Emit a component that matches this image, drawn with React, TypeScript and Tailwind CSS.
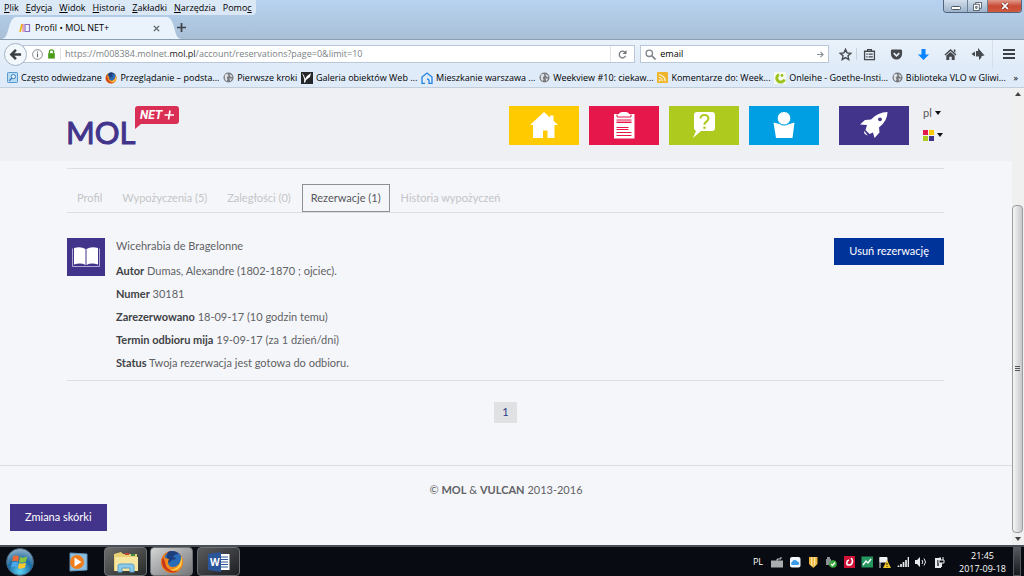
import { useState } from 'react'
import type { ReactNode } from 'react'

const MENU = [
  ['', 'P', 'lik'],
  ['', 'E', 'dycja'],
  ['', 'W', 'idok'],
  ['', 'H', 'istoria'],
  ['', 'Z', 'akładki'],
  ['', 'N', 'arzędzia'],
  ['Pomo', 'c', ''],
]

const TABS = ['Profil', 'Wypożyczenia (5)', 'Zaległości (0)', 'Rezerwacje (1)', 'Historia wypożyczeń']

const DETAILS = [
  ['Autor', 'Dumas, Alexandre (1802-1870 ; ojciec).'],
  ['Numer', '30181'],
  ['Zarezerwowano', '18-09-17 (10 godzin temu)'],
  ['Termin odbioru mija', '19-09-17 (za 1 dzień/dni)'],
  ['Status', 'Twoja rezerwacja jest gotowa do odbioru.'],
]

function Firefox({ className }: { className: string }) {
  return (
    <svg viewBox="0 0 24 24" className={className} aria-hidden="true">
      <circle cx="12" cy="12" r="11" fill="#e8701a" />
      <circle cx="13" cy="10" r="9" fill="#2b6cb8" />
      <path d="M8 2c3-2 8-1 11 2-3 0-5 1-6 3 2 0 3 1 3 2l-4 1-3 3c-2-2-3-7-1-11z" fill="#1d3f7e" />
      <path d="M21 5c3 6 2 12-2 15-5 4-13 3-16-2C1 14 1 9 4 5l1 3 4 1-1 3c0 3 2 5 5 5 5 0 9-5 8-12z" fill="#f08a1d" />
      <path d="M21 6c2 5 1 10-3 13-3 2-7 2-9 1 8 0 13-6 12-14z" fill="#ffd44a" />
      <path d="M3 7c-2 5-1 10 3 13 4 3 9 3 12 1-5 1-10-1-12-5-1-3-1-6-3-9z" fill="#c8351b" />
    </svg>
  )
}

function Globe() {
  return (
    <svg viewBox="0 0 12 12" className="size-[11px] shrink-0" aria-hidden="true">
      <circle cx="6" cy="6" r="5.5" fill="#777b80" />
      <path d="M2 3l3-1 1 2-2 2 1 2-1 2-2-2zM7 2l3 2v2L8 5zM7 7l3 0-2 3z" fill="#dfe3e6" />
    </svg>
  )
}

const BOOKMARKS: { label: string; icon: ReactNode }[] = [
  {
    label: 'Często odwiedzane',
    icon: (
      <svg viewBox="0 0 12 12" className="size-[11px] shrink-0" aria-hidden="true">
        <rect x=".5" y=".5" width="11" height="11" rx="1" fill="#b9dcf5" stroke="#4b8fc7" />
        <circle cx="7" cy="5" r="2.3" fill="#e8f5fd" stroke="#2f74b5" />
        <path d="M5.3 6.7L2.5 9.5" stroke="#2f74b5" strokeWidth="1.4" />
      </svg>
    ),
  },
  { label: 'Przeglądanie – podsta...', icon: <Firefox className="size-3 shrink-0" /> },
  { label: 'Pierwsze kroki', icon: <Globe /> },
  {
    label: 'Galeria obiektów Web ...',
    icon: (
      <svg viewBox="0 0 12 12" className="size-3 shrink-0" aria-hidden="true">
        <path d="M0 0h12v12H0z" fill="#25282b" />
        <path d="M1 1c2 2 3 4 3 6l2-3 4-3-1 4-4 3-1 3-1-1c1-3-1-6-2-9z" fill="#fff" />
      </svg>
    ),
  },
  {
    label: 'Mieszkanie warszawa ...',
    icon: (
      <svg viewBox="0 0 12 12" className="size-3 shrink-0" fill="none" stroke="#2583e0" strokeWidth="1.3" aria-hidden="true">
        <path d="M4 11.300H1V5l5-4 5 4v6.300H8V8.500a2 2 0 00-2-1.500" />
      </svg>
    ),
  },
  { label: 'Weekview #10: ciekaw...', icon: <Globe /> },
  {
    label: 'Komentarze do: Week...',
    icon: (
      <svg viewBox="0 0 12 12" className="size-[11px] shrink-0" aria-hidden="true">
        <rect width="12" height="12" rx="1" fill="#efb52d" />
        <path d="M2 3a7 7 0 017 7M2 6a4 4 0 014 4" fill="none" stroke="#fff6d8" strokeWidth="1.300" />
        <circle cx="3" cy="9.300" r="1" fill="#fff6d8" />
      </svg>
    ),
  },
  {
    label: 'Onleihe - Goethe-Insti...',
    icon: (
      <svg viewBox="0 0 12 12" className="size-3 shrink-0" aria-hidden="true">
        <path d="M0 0h12v12H0z" fill="#f6faf0" />
        <path d="M5 2.500a4 4 0 105.500 5" fill="none" stroke="#9cc31c" strokeWidth="3" />
        <circle cx="8" cy="3.500" r="1.400" fill="#9cc31c" />
      </svg>
    ),
  },
  { label: 'Biblioteka VLO w Gliwi...', icon: <Globe /> },
]

const TOOLS: { label: string; icon: ReactNode }[] = [
  {
    label: 'Zakładki',
    icon: (
      <svg viewBox="0 0 14 14" className="size-[13px]" fill="none" stroke="#45484c" aria-hidden="true">
        <path d="M1.700 3.500h10.600v9H1.700z" strokeWidth="1.400" />
        <path d="M5 3.500V1.700h4v1.800" strokeWidth="1.400" />
        <path d="M3.500 6.500h1.500M6 6.500h4.500M3.500 9.500h1.500M6 9.500h4.500" strokeWidth="1.400" />
      </svg>
    ),
  },
  {
    label: 'Pocket',
    icon: (
      <svg viewBox="0 0 14 14" className="size-[13px]" aria-hidden="true">
        <path d="M1 3a1.500 1.500 0 011.500-1.500h9A1.500 1.500 0 0113 3v3.500a6 6 0 01-12 0z" fill="#45484c" />
        <path d="M4 5.500l3 3 3-3" fill="none" stroke="#e4effa" strokeWidth="1.700" />
      </svg>
    ),
  },
  {
    label: 'Pobieranie',
    icon: (
      <svg viewBox="0 0 14 14" className="size-[13px]" aria-hidden="true">
        <path d="M4.800 1h4.400v6H13l-6 6-6-6h3.800z" fill="#0a84ff" />
      </svg>
    ),
  },
  {
    label: 'Strona startowa',
    icon: (
      <svg viewBox="0 0 14 14" className="size-[13px]" fill="#45484c" aria-hidden="true">
        <path d="M7 1l6.500 6-1 1L7 3.200 1.500 8l-1-1z" />
        <path d="M10.500 1.500h1.700v3.500l-1.700-1.500zM2.500 8L7 4.200 11.500 8v5H8.300V9.500H5.700V13H2.500z" />
      </svg>
    ),
  },
  {
    label: 'Dodatki',
    icon: (
      <svg viewBox="0 0 14 14" className="size-[14px]" fill="#45484c" aria-hidden="true">
        <path d="M7 1l6.500 7.500-3 .5v1.500L8 13V9.500H5V4h2z" />
        <path d="M4 4.500v5L.5 7z" />
      </svg>
    ),
  },
]

const NAV: { label: string; tile: string; icon: ReactNode }[] = [
  {
    label: 'Strona główna',
    tile: 'bg-[#ffcb00]',
    icon: <path d="M14 0l6 5.500V3.500h3.500v5.200L28 13h-3.500v13h-7v-7.500h-4.500V26H3V13H0z" />,
  },
  {
    label: 'Katalog',
    tile: 'bg-[#e5174b]',
    icon: (
      <>
        <path d="M4 2h5c0-1.500 2-2 5-2s5 .5 5 2h5.500v24.500H4z" />
        <path d="M7 2.500v2.500h14V2.500" fill="none" stroke="#e5174b" />
        <path d="M6.500 8h15M6.500 10.500h15M6.500 15.500h12M6.500 17.500h12M6.500 20.500h15M6.500 23.500h15" stroke="#e5174b" strokeWidth="1" />
        <path d="M6.500 9.200h15" stroke="#ef6f8e" />
      </>
    ),
  },
  {
    label: 'Pomoc',
    tile: 'bg-[#afca1f]',
    icon: (
      <>
        <path d="M7 0h15q3 0 3 3v13q0 3-3 3H11L3 26l3-7Q4 18 4 16V3q0-3 3-3z" />
        <path d="M10.500 6.500c0-4.500 8-4.500 8-.2 0 3.200-4 3-4 6.500" fill="none" stroke="#afca1f" strokeWidth="2" />
        <circle cx="14.500" cy="15.700" r="1.300" fill="#afca1f" />
      </>
    ),
  },
  {
    label: 'Czytelnik',
    tile: 'bg-[#009fe3]',
    icon: (
      <>
        <path d="M3.500 10.500l6 1.500q5 2 10 0l5-1.500L22.500 26H6z" />
        <circle cx="14" cy="6.300" r="6.800" stroke="#009fe3" />
      </>
    ),
  },
  {
    label: 'Nowości',
    tile: 'ml-[10px] bg-[#42348b]',
    icon: (
      <>
        <path d="M27.500 0q0 9-8.500 15.500l.5 5L14.500 26l-1.500-5.500-3.500 1.500-4-4L7 13 0 12.500 5 8l6-.500Q18 0 27.500 0z" />
        <path d="M4 19q-.5 3.500 4 4.500-1.500-1.500-2-2.500z" />
        <circle cx="20" cy="7.300" r="1.900" fill="#42348b" />
      </>
    ),
  },
]

const TRAY: { label: string; icon: ReactNode }[] = [
  {
    label: 'Klawiatura',
    icon: <path d="M0 5h12v6H0zM6 5V3h4V1" fill="#a9adb0" stroke="#a9adb0" />,
  },
  {
    label: 'iCloud',
    icon: (
      <>
        <rect x="1" y="1" width="10.500" height="10.500" rx="2" fill="#f4f8fc" />
        <path d="M3 9a1.700 1.700 0 010-3 3 3 0 015.500-.5A1.800 1.800 0 019 9z" fill="#3a9be8" />
      </>
    ),
  },
  {
    label: 'Ochrona',
    icon: (
      <>
        <path d="M2 1h8.500v7L6.300 12 2 8z" fill="#edb73f" />
        <path d="M4.800 1v9M7.700 1v9" stroke="#fff1bd" />
      </>
    ),
  },
  {
    label: 'Bezpieczne usuwanie sprzętu',
    icon: (
      <>
        <path d="M2 1h3v2h1v6H1V3h1z" fill="#8b9094" />
        <circle cx="8" cy="8" r="3.800" fill="#39a93d" />
        <path d="M6 8l1.500 1.500L10 6.500" fill="none" stroke="#fff" strokeWidth="1.200" />
      </>
    ),
  },
  {
    label: 'Antywirus',
    icon: (
      <>
        <path d="M1 0h11v12H1z" fill="#cf1238" />
        <path d="M8 2c3 3 1 7-2 7s-3-4 0-5" fill="none" stroke="#fff" strokeWidth="1.500" />
      </>
    ),
  },
  {
    label: 'Wydajność',
    icon: (
      <>
        <path d="M.5.500h11.500v11H.5z" fill="#279760" />
        <path d="M2 9l3-4 2 2 3-4" fill="none" stroke="#fff" strokeWidth="1.300" />
      </>
    ),
  },
  {
    label: 'Centrum akcji',
    icon: (
      <>
        <path d="M1 1v11M1 1.500h7V6H1z" fill="#eef1f3" stroke="#eef1f3" />
        <path d="M8 4l4 8H4z" fill="#f1c52c" />
        <path d="M8 7v2M8 10v1" stroke="#30280a" />
      </>
    ),
  },
  {
    label: 'Sieć',
    icon: <path d="M1.500 11V9.500M4 11V8M6.500 11V6M9 11V4M11.500 11V1" stroke="#e8ebee" strokeWidth="1.700" />,
  },
  {
    label: 'Głośność',
    icon: (
      <>
        <path d="M0 4h2l3-3v10L2 8H0z" fill="#e8ebee" />
        <path d="M7 4q1.500 2 0 4M9 2.500q3 3.500 0 7" fill="none" stroke="#e8ebee" />
      </>
    ),
  },
  {
    label: 'Zasilanie',
    icon: (
      <>
        <path d="M2 2h6v10H2z" fill="#e8ebee" />
        <path d="M4 4h2v6H4z" fill="#5a6065" />
        <path d="M7 1v3M10 1v3M6 4h5v3H6zM8.500 7v4" fill="#0a0d13" stroke="#e8ebee" />
      </>
    ),
  },
]

function AddressField() {
  const [url, setUrl] = useState('https://m008384.molnet.mol.pl/account/reservations?page=0&limit=10')
  const [editing, setEditing] = useState(false)
  const [before, after] = url.split('mol.pl')

  // the domain is only highlighted while the field is not being edited
  return (
    <div className="relative flex h-full min-w-0 flex-1 items-center">
      <input
        aria-label="Adres strony"
        value={editing ? url : ''}
        onFocus={() => setEditing(true)}
        onBlur={() => setEditing(false)}
        onChange={(e) => setUrl(e.target.value)}
        className="h-full w-full bg-transparent text-[9px] text-[#333] outline-none"
      />
      {!editing && (
        <span className="pointer-events-none absolute left-0 text-[9px] whitespace-nowrap text-[#7b7f84]">
          {before}
          <span className="text-[#1a1a1a]">mol.pl</span>
          {after}
        </span>
      )}
    </div>
  )
}

function BrowserChrome() {
  const [query, setQuery] = useState('email')

  return (
    <header className="font-['Open_Sans',sans-serif] text-black">
      <div className="flex h-10 flex-col justify-between border-b border-[#8b9cb0] bg-linear-to-b from-[#b7d3f1] to-[#a9bfd6]">
        <div className="flex items-start justify-between">
          <nav className="flex h-[15px] items-center gap-[7px] rounded-br bg-[#dfeaf6]/90 pr-1 pl-1 text-[9px]">
            {MENU.map(([start, key, end]) => (
              <button key={start + key + end} className="whitespace-nowrap">
                {start}
                <u>{key}</u>
                {end}
              </button>
            ))}
          </nav>
          <div className="mr-0.5 flex h-[13px] overflow-hidden rounded-b border border-t-0 border-[#53657b] text-white">
            <button aria-label="Minimalizuj" className="flex w-6 items-center justify-center border-r border-[#6b7f96] bg-linear-to-b from-[#d3dfec] to-[#9db3cb]">
              <svg viewBox="0 0 10 4" className="mt-1 h-1 w-[10px]"><rect x=".5" y=".5" width="9" height="3" rx="1" fill="#fff" stroke="#4c5661" /></svg>
            </button>
            <button aria-label="Przywróć" className="flex w-5 items-center justify-center border-r border-[#6b7f96] bg-linear-to-b from-[#d3dfec] to-[#9db3cb]">
              <svg viewBox="0 0 10 10" className="size-[9px]" fill="#fff" stroke="#4c5661"><path d="M3 .5h6.500V7H3z" /><path d="M.5 2.500H7v7H.5z" /><path d="M3 5h1.500v2H3z" /></svg>
            </button>
            <button aria-label="Zamknij" className="flex w-[33px] items-center justify-center bg-linear-to-b from-[#e09a8c] via-[#c84a35] to-[#cf5a3c]">
              <svg viewBox="0 0 10 10" className="size-2"><path d="M1.500 1.500l7 7M8.500 1.500l-7 7" stroke="#5c2a22" strokeWidth="3.500" /><path d="M1.500 1.500l7 7M8.500 1.500l-7 7" stroke="#fff" strokeWidth="2.200" /></svg>
            </button>
          </div>
        </div>
        <div className="flex h-[22px] items-stretch">
          <svg viewBox="0 0 14 22" className="ml-0.5 h-[22px] w-[14px]" aria-hidden="true">
            <path d="M0 22C8 21 5 2 14 0v22z" fill="#eaf2fb" />
          </svg>
          <div className="flex w-[151px] items-center bg-[#eaf2fb] pr-[7px] pl-[3px] text-[9px]">
            <svg viewBox="0 0 12 10" className="mr-1 h-[10px] w-3" fill="none" aria-hidden="true">
              <path d="M1 9l2-8" stroke="#e9b400" strokeWidth="1.500" />
              <path d="M4 1v8" stroke="#e85b7d" />
              <path d="M6 1.500h4.500v7H6z" stroke="#8d6cc2" strokeWidth="1.200" />
            </svg>
            <span className="flex-1">Profil • MOL NET+</span>
            <button aria-label="Zamknij kartę">
              <svg viewBox="0 0 8 8" className="size-[7px]"><path d="M1 1l6 6M7 1L1 7" stroke="#5d6369" strokeWidth="1.600" /></svg>
            </button>
          </div>
          <svg viewBox="0 0 14 22" className="h-[22px] w-[14px]" aria-hidden="true">
            <path d="M14 22C6 21 9 2 0 0v22z" fill="#eaf2fb" />
          </svg>
          <button aria-label="Nowa karta" className="-ml-1 pb-px">
            <svg viewBox="0 0 8 8" className="size-[9px]"><path d="M4 0v8M0 4h8" stroke="#3c4248" strokeWidth="1.500" /></svg>
          </button>
        </div>
      </div>

      <div className="flex h-7 items-center bg-linear-to-b from-[#eaf2fb] to-[#dfebf8] pl-1">
        <button aria-label="Wstecz" className="z-10 flex size-[23px] shrink-0 items-center justify-center rounded-full border border-[#a4b3c4] bg-[#f3f8fd]">
          <svg viewBox="0 0 14 14" className="size-[13px]"><path d="M7.500 2L2.500 7l5 5M3 7h10" fill="none" stroke="#3c4044" strokeWidth="2.700" /></svg>
        </button>
        <div className="-ml-1 flex h-[18px] flex-1 items-center border border-[#b9c8d9] bg-white pl-2">
          <svg viewBox="0 0 12 12" className="size-[11px]" aria-hidden="true">
            <circle cx="6" cy="6" r="5.300" fill="none" stroke="#7a7f84" />
            <path d="M6 5v4M6 2.700V4" stroke="#666" strokeWidth="1.200" />
          </svg>
          <svg viewBox="0 0 10 12" className="ml-1 h-[10px] w-[9px]" aria-hidden="true">
            <path d="M2.500 5V3.500a2.500 2.500 0 015 0V5" fill="none" stroke="#4b9c1c" strokeWidth="1.600" />
            <rect x="1" y="5" width="8" height="6.500" fill="#4b9c1c" />
          </svg>
          <span className="mx-1 h-3 w-px bg-[#e0e4e8]" />
          <AddressField />
          <button aria-label="Odśwież" className="flex h-full w-6 items-center justify-center border-l border-[#e0e4e8]">
            <svg viewBox="0 0 10 10" className="size-[9px]"><path d="M7.500 2.200A3.700 3.700 0 108.500 6.500" fill="none" stroke="#74797e" strokeWidth="1.400" /><path d="M9.500 0v4.500H5z" fill="#74797e" /></svg>
          </button>
        </div>
        <div className="ml-[5px] flex h-[18px] w-[18.5%] items-center border border-[#b9c8d9] bg-white px-1">
          <svg viewBox="0 0 12 12" className="mr-1 size-[11px] shrink-0" aria-hidden="true">
            <circle cx="4.700" cy="4.700" r="3.500" fill="none" stroke="#808589" strokeWidth="1.500" />
            <path d="M7.500 7.500L11.500 11.500" stroke="#808589" strokeWidth="1.800" />
          </svg>
          <input
            aria-label="Szukaj"
            value={query}
            onChange={(e) => setQuery(e.target.value)}
            className="min-w-0 flex-1 text-[9px] outline-none"
          />
          <button aria-label="Wyszukaj">
            <svg viewBox="0 0 8 8" className="size-[7px]"><path d="M0 4h7M4 1l3 3-3 3" fill="none" stroke="#8b9095" strokeWidth="1.300" /></svg>
          </button>
        </div>
        <button aria-label="Dodaj zakładkę" className="ml-[10px]">
          <svg viewBox="0 0 14 14" className="size-[13px]"><path d="M7 1.500l1.700 3.700 4 .5-3 2.700.8 4L7 10.400l-3.500 2 .8-4-3-2.700 4-.5z" fill="none" stroke="#45484c" strokeWidth="1.500" /></svg>
        </button>
        <span className="ml-1 h-3 w-px bg-[#c6d2df]" />
        <div className="ml-[6px] flex gap-[14px]">
          {TOOLS.map((tool) => (
            <button key={tool.label} aria-label={tool.label}>{tool.icon}</button>
          ))}
        </div>
        <button aria-label="Menu" className="ml-[7px] flex h-full w-8 items-center justify-center border-l border-[#d3dfeb]">
          <svg viewBox="0 0 12 10" className="h-[10px] w-3"><path d="M0 1h12M0 5h12M0 9h12" stroke="#3c4044" strokeWidth="2" /></svg>
        </button>
      </div>

      <nav className="flex h-5 items-center justify-between overflow-hidden border-b border-[#c3cedb] bg-[#dfebf8] pr-[6px] pl-[7px] text-[9px]">
        {BOOKMARKS.map((bookmark) => (
          <a key={bookmark.label} href="#" className="flex items-center gap-[3px] whitespace-nowrap">
            {bookmark.icon}
            {bookmark.label}
          </a>
        ))}
        <button aria-label="Więcej zakładek" className="ml-1">»</button>
      </nav>
    </header>
  )
}

function Logo() {
  return (
    <a href="#" aria-label="MOL NET+" className="flex">
      <svg viewBox="0 0 112 48" className="h-12 w-28">
        <text x="-1" y="38" fill="#42348b" stroke="#42348b" strokeWidth="1" fontFamily="Lato, sans-serif" fontSize="31">MOL</text>
        <path d="M71 0h38q3 0 3 3v12q0 3-3 3H74l-6 5V3q0-3 3-3z" fill="#d92f55" />
        <text x="73" y="13" fill="#fff" fontFamily="Roboto, sans-serif" fontSize="12" fontWeight="700" fontStyle="italic">NET</text>
        <path d="M97.500 9h9.500M103 4.500l-1.500 9" stroke="#fff" strokeWidth="1.600" />
      </svg>
    </a>
  )
}

function Caret() {
  return (
    <svg viewBox="0 0 6 4" className="h-1 w-[6px]" aria-hidden="true">
      <path d="M0 0h6L3 4z" fill="#111" />
    </svg>
  )
}

function SiteHeader() {
  return (
    <div className="flex h-[73px] shrink-0 items-start justify-between bg-[#eff0f4] pt-[18px] pr-[69px] pl-[67px]">
      <Logo />
      <div className="flex">
        <nav className="flex gap-[10px]">
          {NAV.map((item) => (
            <a key={item.label} href="#" aria-label={item.label} className={`${item.tile} flex h-[39px] w-[70px] items-center justify-center`}>
              <svg viewBox="0 0 28 27" className="h-[27px] w-7" fill="#fff">{item.icon}</svg>
            </a>
          ))}
        </nav>
        <div className="ml-[14px] flex flex-col items-start gap-2">
          <label className="flex h-[14px] items-center">
            <select aria-label="Język" defaultValue="pl" className="w-3 appearance-none bg-transparent text-[11px] text-[#555] outline-none">
              <option>pl</option>
            </select>
            <Caret />
          </label>
          <button aria-label="Skórka" className="flex h-[14px] items-center gap-[3px]">
            <svg viewBox="0 0 11 11" className="size-[11px]" aria-hidden="true">
              <path d="M0 0h5v5H0z" fill="#e5174b" />
              <path d="M6 0h5v5H6z" fill="#ffcb00" />
              <path d="M0 6h5v5H0z" fill="#afca1f" />
              <path d="M6 6h5v5H6z" fill="#42348b" />
            </svg>
            <Caret />
          </button>
        </div>
      </div>
    </div>
  )
}

function Reservations() {
  const [active, setActive] = useState('Rezerwacje (1)')

  return (
    <main className="mr-[68px] ml-[67px] pt-[7px]">
      <div className="border-t border-[#dcdee1] pt-[15px]">
        <div className="flex border-b border-[#dcdee1]">
          {TABS.map((tab) => (
            <button
              key={tab}
              onClick={() => setActive(tab)}
              className={
                tab === active
                  ? 'mx-px h-7 border border-[#8c8f94] px-2 whitespace-nowrap text-[#55585c]'
                  : 'h-7 px-[10px] whitespace-nowrap text-[#c3c5c8]'
              }
            >
              {tab}
            </button>
          ))}
        </div>
      </div>

      <article className="flex items-start border-b border-[#dcdee1] pt-[25px] pb-0.5">
        <div className="flex size-[38px] items-center justify-center bg-[#42348b]">
          <svg viewBox="0 0 28 20" className="h-5 w-7" aria-hidden="true">
            <path d="M.5 1.500v18h27v-18" fill="none" stroke="#cfcbe4" strokeWidth=".8" />
            <path d="M2 1q7-2 11.500 1v16Q9 15.500 2 17.500zM26 1q-7-2-11.500 1v16q4.500-2.500 11.500-.5z" fill="#fff" />
          </svg>
        </div>
        <div className="ml-[11px] flex-1">
          <h2 className="h-[25px] leading-4">Wicehrabia de Bragelonne</h2>
          {DETAILS.map(([label, value]) => (
            <p key={label} className="h-[23px] leading-4">
              <strong className="text-[#3f4246]">{label}</strong> {value}
            </p>
          ))}
        </div>
        <button className="h-[27px] bg-[#00339a] px-[15px] text-white">Usuń rezerwację</button>
      </article>

      <nav aria-label="Strony" className="flex justify-center pt-[21px] pb-[42px]">
        <a href="#" className="flex h-[21px] w-[23px] items-center justify-center bg-[#e0e1e3] text-[#2b3a86]">1</a>
      </nav>
    </main>
  )
}

function Scrollbar() {
  return (
    <div className="flex w-3 shrink-0 flex-col items-center bg-[#f0f0f1]" aria-hidden="true">
      <svg viewBox="0 0 6 4" className="my-1 h-1 w-[6px]"><path d="M0 4h6L3 0z" fill="#444" /></svg>
      <div className="flex w-full flex-1 flex-col">
        <div className="flex-[105]" />
        <div className="flex w-[11px] flex-[328] flex-col items-center justify-center gap-px rounded-sm border border-[#9a9da1] bg-linear-to-r from-[#f6f6f6] to-[#c6c8cb]">
          <span className="h-px w-[5px] bg-[#555]" />
          <span className="h-px w-[5px] bg-[#555]" />
          <span className="h-px w-[5px] bg-[#555]" />
        </div>
      </div>
      <svg viewBox="0 0 6 4" className="my-1 h-1 w-[6px]"><path d="M0 0h6L3 4z" fill="#444" /></svg>
    </div>
  )
}

function Taskbar() {
  const app = 'flex h-[29px] w-[43px] items-center justify-center rounded-sm border border-[#6d7176]'

  return (
    <footer className="flex h-[31px] shrink-0 items-center border-t-2 border-[#4a4f57] bg-[#080b11] pl-[6px] font-['Open_Sans',sans-serif] text-white">
      <button aria-label="Start">
        <svg viewBox="0 0 28 28" className="size-7">
          <defs>
            <radialGradient id="orb" cx=".5" cy=".85" r=".9">
              <stop offset="0" stopColor="#5fd4f5" />
              <stop offset=".5" stopColor="#1c6ba5" />
              <stop offset="1" stopColor="#a9bfcf" />
            </radialGradient>
          </defs>
          <circle cx="14" cy="14" r="13.500" fill="url(#orb)" stroke="#3d5a70" />
          <path d="M7 8.500q3-2 6 0l-1 5q-3-1.500-6 0z" fill="#ef6a34" />
          <path d="M14 9q3 1.500 7-.5l-1 5q-4 2-7 .5z" fill="#8cc63c" />
          <path d="M6 14.500q3-1.500 6 0l-1 5q-3-2-6 0z" fill="#4aa8ec" />
          <path d="M13 15q3 1.500 7-.5l-1 5q-4 2-7 .5z" fill="#fdc92e" />
        </svg>
      </button>
      <button aria-label="Windows Media Player" className="mr-4 ml-[34px]">
        <svg viewBox="0 0 20 20" className="size-5">
          <path d="M2 1l17 1v16L2 19z" fill="#8dbfe0" stroke="#5e93b9" />
          <circle cx="9" cy="10" r="7" fill="#f07d1c" />
          <path d="M6.500 5.500l7 4.500-7 4.500z" fill="#fff" />
        </svg>
      </button>
      <div className="flex gap-[3px]">
        <button aria-label="Eksplorator Windows" className={`${app} bg-linear-to-br from-[#6c6d6b] to-[#2a2c2c]`}>
          <svg viewBox="0 0 26 22" className="h-[22px] w-[26px]">
            <path d="M1 3l7-2 2 2h14v17H1z" fill="#e9cf73" />
            <path d="M2 6h23v14H2z" fill="#f6e6a0" />
            <path d="M12 2h4v2h-4z" fill="#c8402e" />
            <path d="M18 3h4v2h-4z" fill="#3c8a4a" />
            <path d="M5 21v-6q0-2 2-2h12q2 0 2 2v6h-4v-4H9v4z" fill="#8ecbea" stroke="#5ba1cc" />
          </svg>
        </button>
        <button aria-label="Firefox" className={`${app} bg-linear-to-br from-[#d5d6d6] to-[#747678]`}>
          <Firefox className="size-6" />
        </button>
        <button aria-label="Word" className={`${app} ml-px bg-linear-to-br from-[#5a5b5d] to-[#1e2023]`}>
          <svg viewBox="0 0 22 20" className="h-5 w-[22px]">
            <path d="M10 2h11.500v16H10z" fill="#fff" />
            <path d="M13 5h7M13 7.500h7M13 10h7M13 12.500h7M13 15h7" stroke="#2a5699" />
            <path d="M0 2l13-2v20L0 18z" fill="#2a5699" />
            <text x="2" y="14" fill="#fff" fontFamily="'Open Sans', sans-serif" fontSize="10" fontWeight="700">W</text>
          </svg>
        </button>
      </div>

      <div className="ml-auto flex h-full items-center pr-[14px]">
        <button className="mr-2 text-[9px]">PL</button>
        <div className="flex gap-[6px]">
          {TRAY.map((item) => (
            <button key={item.label} aria-label={item.label}>
              <svg viewBox="0 0 12 12" className="size-3" fill="none">{item.icon}</svg>
            </button>
          ))}
        </div>
      </div>
      <button className="mr-[7px] text-center text-[9px] leading-[13px]">
        21:45
        <br />
        2017-09-18
      </button>
      <span className="mr-[3px] h-full w-2 border border-[#55595e] bg-linear-to-b from-[#565a60] to-[#17191d]" />
    </footer>
  )
}

export default function App() {
  return (
    <div className="flex min-h-screen flex-col bg-[#f5f6f9]">
      <BrowserChrome />
      <div className="flex flex-1">
        <div className="flex min-w-0 flex-1 flex-col font-[Lato,sans-serif] text-[11px] text-[#5f6266]">
          <SiteHeader />
          <Reservations />
          <div className="flex flex-1 flex-col items-start border-t border-[#dcdee1] pt-4">
            <p className="self-center">
              © <strong>MOL</strong> &amp; <strong>VULCAN</strong> 2013-2016
            </p>
            <button className="mt-auto mb-[14px] ml-[10px] h-[27px] bg-[#42348b] px-[15px] text-white">Zmiana skórki</button>
          </div>
        </div>
        <Scrollbar />
      </div>
      <Taskbar />
    </div>
  )
}
